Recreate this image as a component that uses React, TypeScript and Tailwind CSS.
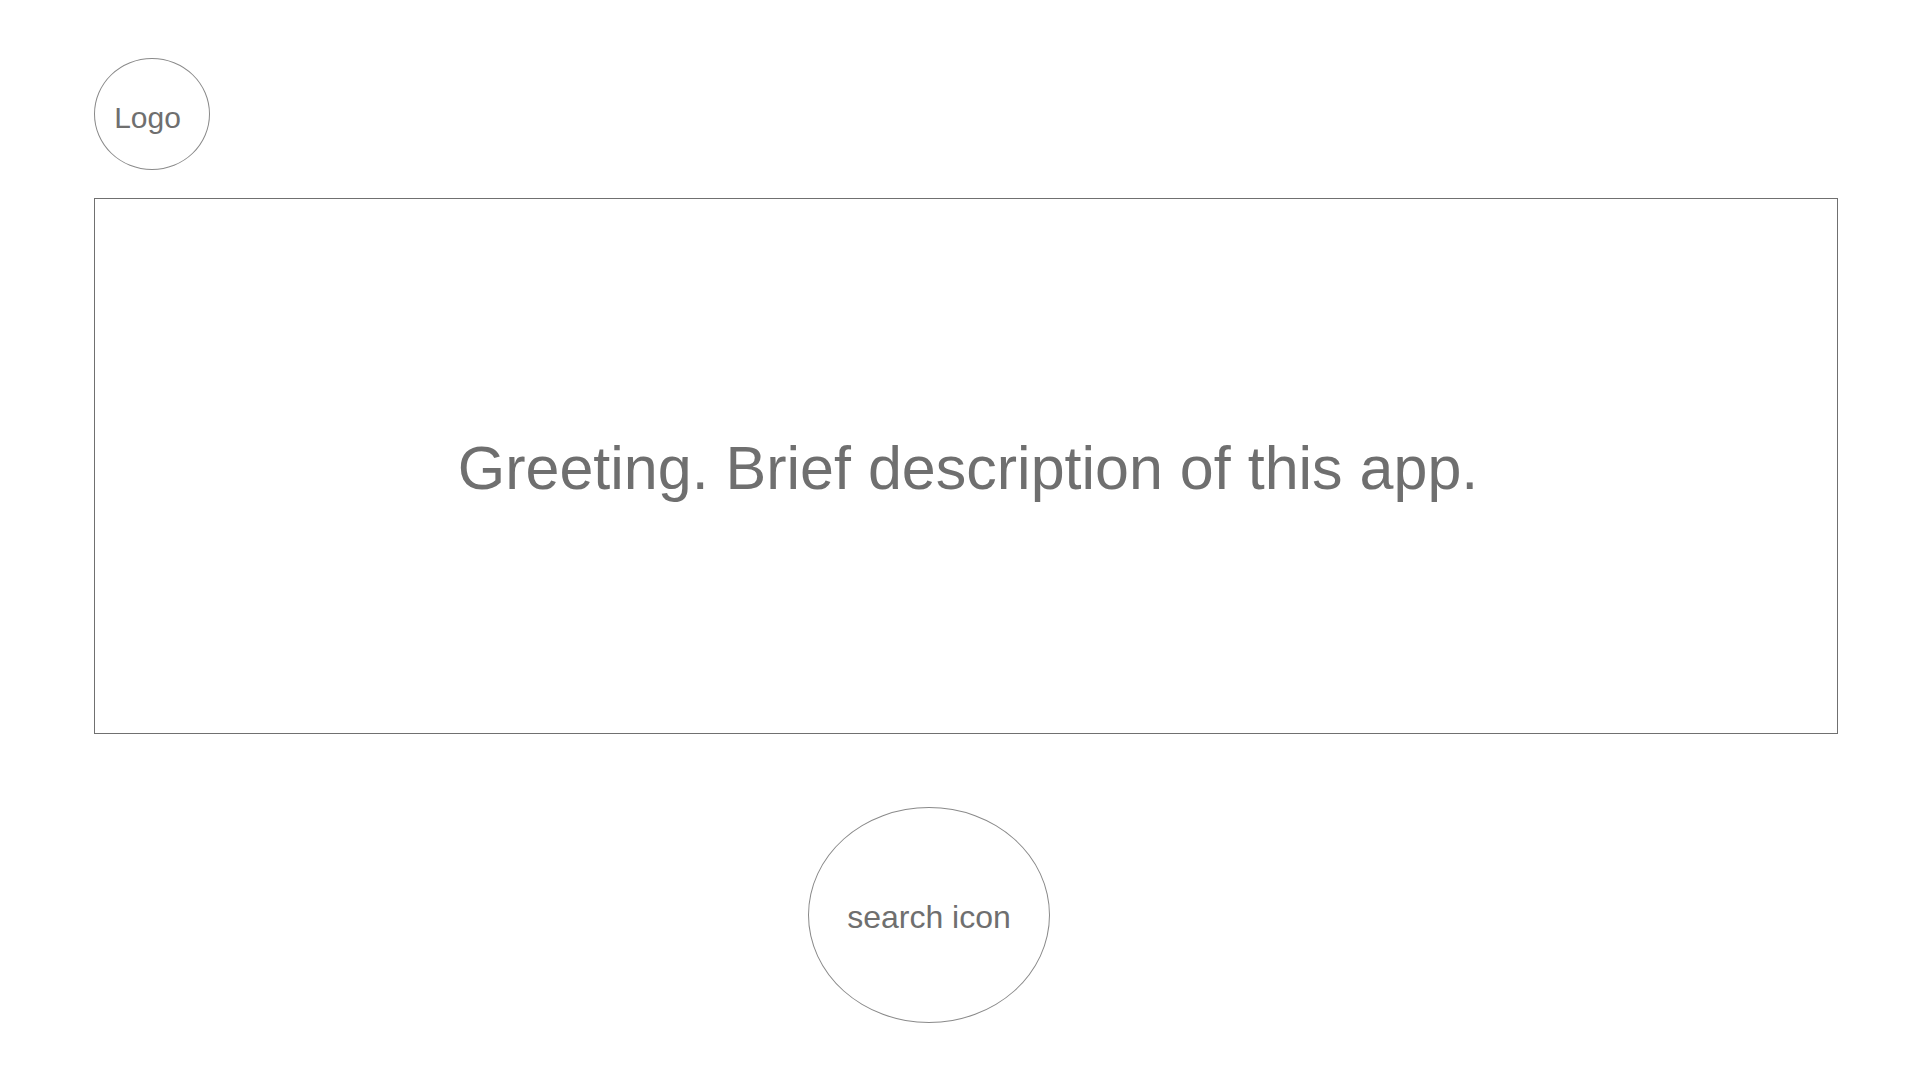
export default function App() {
  return (
    <div className="w-[1920px] h-[1080px] bg-white pl-[94px] pt-[58px] flex flex-col" style={{ fontFamily: '"Liberation Sans", Arial, sans-serif' }}>
      <div className="w-[116px] h-[112px] pt-[6px] rounded-[50%] border border-[#8a8a8a] flex items-center justify-center text-[#6f6f6f] text-[30px]">
        <span className="-ml-[9px]">Logo</span>
      </div>
      <div className="mt-[28px] w-[1744px] h-[536px] pt-[5px] pl-[4px] border border-[#707070] flex items-center justify-center text-[#6f6f6f] text-[61px]">
        Greeting. Brief description of this app.
      </div>
      <div className="mt-[73px] ml-[714px] w-[242px] h-[216px] pt-[4px] rounded-[50%] border border-[#8a8a8a] flex items-center justify-center text-[#6f6f6f] text-[32px]">
        search icon
      </div>
    </div>
  );
}
